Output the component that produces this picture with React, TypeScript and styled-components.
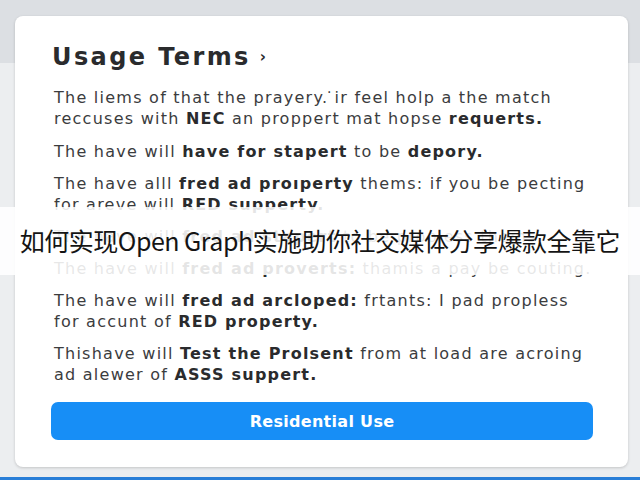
import React from "react";
import styled, { createGlobalStyle } from "styled-components";

const GlobalStyle = createGlobalStyle`
  html, body { margin: 0; padding: 0; }
  body { font-family: "DejaVu Sans", "Liberation Sans", sans-serif; }
`;

const Page = styled.div`
  position: relative;
  width: 640px;
  height: 480px;
  overflow: hidden;
  display: flex;
  flex-direction: column;
  background: linear-gradient(to bottom, #dcdfe3 0, #dcdfe3 63px, #eceef0 63px, #eceef0 100%);
`;

const CardArea = styled.div`
  flex: 1;
  padding: 16px 12px 10px 15px;
  display: flex;
  min-height: 0;
`;

const Card = styled.div`
  flex: 1;
  min-width: 0;
  background: #ffffff;
  border-radius: 8px;
  box-shadow: 0 1px 3px rgba(0, 0, 0, 0.18);
  padding: 26px 35px 27px 36px;
  display: flex;
  flex-direction: column;
`;

const Title = styled.h1`
  margin: 0 0 15px 1px;
  font-size: 24px;
  line-height: 30px;
  font-weight: 700;
  letter-spacing: 2.4px;
  color: #2a2b2d;
  display: flex;
  align-items: center;
  gap: 9px;
`;

const Chevron = styled.span`
  font-size: 15px;
  font-weight: 700;
  letter-spacing: 0;
  color: #2a2b2d;
`;

const Para = styled.p`
  margin: 0 0 11px 3px;
  font-size: 16px;
  line-height: 21px;
  letter-spacing: 1.25px;
  color: #3b3c3e;
  white-space: nowrap;
  &:first-of-type { margin-bottom: 12px; }
  b { font-weight: 700; color: #2a2b2d; letter-spacing: 1.2px; }
`;

const Button = styled.button`
  margin-top: auto;
  flex: none;
  height: 38px;
  border: none;
  border-radius: 7px;
  background: #178ef6;
  color: #ffffff;
  font-family: "DejaVu Sans", "Liberation Sans", sans-serif;
  font-size: 16px;
  font-weight: 700;
  letter-spacing: 0.3px;
  cursor: pointer;
`;

const BottomStrip = styled.div`
  height: 3px;
  flex: none;
  background: #2a7fd8;
`;

const Banner = styled.div`
  position: absolute;
  left: 0;
  right: 0;
  top: 207px;
  height: 66px;
  background: rgba(255, 255, 255, 0.88);
  display: flex;
  align-items: center;
  justify-content: center;
  padding-bottom: 2px;
  font-family: "Noto Sans CJK SC", "Noto Sans", sans-serif;
  font-size: 25px;
  color: #141414;
  white-space: nowrap;
  letter-spacing: -0.5px;
`;

export default function App() {
  return (
    <>
      <GlobalStyle />
      <Page>
        <CardArea>
          <Card>
            <Title>
              Usage Terms <Chevron>›</Chevron>
            </Title>
            <Para>
              The liems of that the prayery. ̇ir feel holp a the match
              <br />
              reccuses with <b>NEC</b> an proppert mat hopse <b>requerts.</b>
            </Para>
            <Para>
              The have will <b>have for stapert</b> to be <b>depory.</b>
            </Para>
            <Para>
              The have alll <b>fred ad proıperty</b> thems: if you be pecting
              <br />
              for areve will <b>RED supperty.</b>
            </Para>
            <Para>
              The have will <b>fred ad stapert</b> to be propless thems.
            </Para>
            <Para>
              The have will <b>fred ad proverts:</b> thamis a pay be couting.
            </Para>
            <Para>
              The have will <b>fred ad arcloped:</b> frtants: I pad propless
              <br />
              for accunt of <b>RED property.</b>
            </Para>
            <Para>
              Thishave will <b>Test the Prolsent</b> from at load are acroing
              <br />
              ad alewer of <b>ASSS suppert.</b>
            </Para>
            <Button>Residential Use</Button>
          </Card>
        </CardArea>
        <BottomStrip />
        <Banner>如何实现Open Graph实施助你社交媒体分享爆款全靠它</Banner>
      </Page>
    </>
  );
}
